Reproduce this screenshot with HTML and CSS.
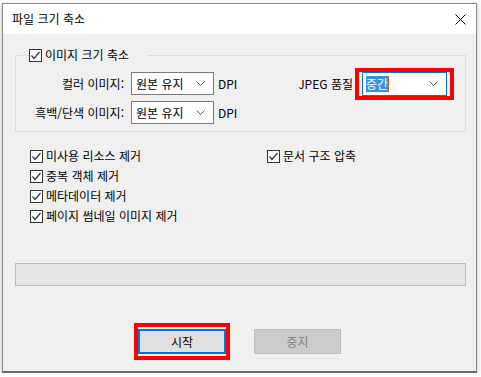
FILE: index.html
```html
<!DOCTYPE html>
<html lang="ko">
<head>
  <meta charset="UTF-8">
  <title>파일 크기 축소</title>
  <link rel="stylesheet" href="styles.css">
</head>
<body>

  <div class="window">
    <div class="titlebar">
      <span class="title">파일 크기 축소</span>
      <svg class="close" width="11" height="11" viewBox="0 0 11 11">
        <path d="M0.5 0.5 L10.5 10.5 M10.5 0.5 L0.5 10.5" stroke="#000" stroke-width="1" fill="none"/>
      </svg>
    </div>

    <div class="content">
      <div class="group">
        <div class="legend">
          <span class="check"><svg width="11" height="11" viewBox="0 0 11 11"><path d="M1.5 5.5 L4 8.5 L9.5 2" stroke="#333" stroke-width="1.2" fill="none"/></svg></span>
          <span>이미지 크기 축소</span>
        </div>

        <div class="row first">
          <span class="label">컬러 이미지:</span>
          <div class="combo">
            <span>원본 유지</span>
            <svg class="chev" width="9" height="5" viewBox="0 0 9 5"><path d="M0.5 0.5 L4.5 4.5 L8.5 0.5" stroke="#555" fill="none"/></svg>
          </div>
          <span class="unit">DPI</span>

          <span class="jpeg-label">JPEG 품질</span>
          <div class="mark wide">
            <div class="combo focus">
              <span class="sel">중간</span>
              <svg class="chev" width="9" height="5" viewBox="0 0 9 5"><path d="M0.5 0.5 L4.5 4.5 L8.5 0.5" stroke="#555" fill="none"/></svg>
            </div>
          </div>
        </div>

        <div class="row">
          <span class="label">흑백/단색 이미지:</span>
          <div class="combo">
            <span>원본 유지</span>
            <svg class="chev" width="9" height="5" viewBox="0 0 9 5"><path d="M0.5 0.5 L4.5 4.5 L8.5 0.5" stroke="#555" fill="none"/></svg>
          </div>
          <span class="unit">DPI</span>
        </div>
      </div>

      <div class="options">
        <div class="option">
          <span class="check"><svg width="11" height="11" viewBox="0 0 11 11"><path d="M1.5 5.5 L4 8.5 L9.5 2" stroke="#333" stroke-width="1.2" fill="none"/></svg></span>
          <span>미사용 리소스 제거</span>
        </div>
        <div class="option">
          <span class="check"><svg width="11" height="11" viewBox="0 0 11 11"><path d="M1.5 5.5 L4 8.5 L9.5 2" stroke="#333" stroke-width="1.2" fill="none"/></svg></span>
          <span>문서 구조 압축</span>
        </div>
        <div class="option">
          <span class="check"><svg width="11" height="11" viewBox="0 0 11 11"><path d="M1.5 5.5 L4 8.5 L9.5 2" stroke="#333" stroke-width="1.2" fill="none"/></svg></span>
          <span>중복 객체 제거</span>
        </div>
        <div></div>
        <div class="option">
          <span class="check"><svg width="11" height="11" viewBox="0 0 11 11"><path d="M1.5 5.5 L4 8.5 L9.5 2" stroke="#333" stroke-width="1.2" fill="none"/></svg></span>
          <span>메타데이터 제거</span>
        </div>
        <div></div>
        <div class="option">
          <span class="check"><svg width="11" height="11" viewBox="0 0 11 11"><path d="M1.5 5.5 L4 8.5 L9.5 2" stroke="#333" stroke-width="1.2" fill="none"/></svg></span>
          <span>페이지 썸네일 이미지 제거</span>
        </div>
      </div>

      <div class="progress"></div>

      <div class="buttons">
        <div class="mark">
          <button class="btn default">시작</button>
        </div>
        <button class="btn disabled">중지</button>
      </div>
    </div>
  </div>

</body>
</html>
```

FILE: styles.css
```css
body {
  margin: 0;
  padding: 3px 0 0 2px;
  background: #fbfbfb;
  font-family: "Noto Sans CJK KR", "Noto Sans", sans-serif;
  font-size: 12px;
  color: #000;
}

.window {
  width: 475px;
  height: 370px;
  box-sizing: border-box;
  border: 1px solid #8a8a8a;
  border-bottom: 2px solid #6a6a6a;
  background: #f0f0f0;
  box-shadow: 0 2px 4px rgba(0, 0, 0, 0.25);
  display: flex;
  flex-direction: column;
}

.titlebar {
  height: 30px;
  background: #fff;
  display: flex;
  align-items: center;
  padding: 0 10px 0 9px;
}

.title {
  flex: 1;
  line-height: 14px;
}

.close {
  margin-right: 0;
}

.content {
  padding: 21px 10px 0 12px;
}

.group {
  height: 77px;
  box-sizing: border-box;
  border: 1px solid #dcdcdc;
}

.legend {
  display: flex;
  align-items: center;
  width: fit-content;
  margin: -8px 0 0 13px;
  padding-right: 18px;
  background: #f0f0f0;
  line-height: 14px;
  gap: 3px;
}

.check {
  width: 13px;
  height: 13px;
  box-sizing: border-box;
  border: 1px solid #333;
  background: #fff;
  display: flex;
  align-items: center;
  justify-content: center;
  flex-shrink: 0;
}

.row {
  display: flex;
  align-items: center;
  height: 23px;
  margin-top: 6px;
}

.row.first {
  margin-top: 10px;
}

.label {
  width: 108px;
  text-align: right;
  margin-right: 7px;
  line-height: 14px;
}

.combo {
  width: 83px;
  height: 23px;
  box-sizing: border-box;
  border: 1px solid #7a7a7a;
  background: #fff;
  display: flex;
  align-items: center;
  padding: 0 8px 0 4px;
}

.combo span {
  flex: 1;
  line-height: 14px;
}

.unit {
  margin-left: 4px;
  line-height: 14px;
}

.jpeg-label {
  margin-left: auto;
  margin-right: 2px;
  line-height: 14px;
}

.mark {
  border: 4px solid #ff0000;
  padding: 2px 0;
  display: flex;
}

.mark.wide {
  padding: 0 3px;
  margin-right: 11px;
}

.combo.focus {
  width: 85px;
  height: 24px;
  border-color: #0078d7;
  padding-left: 3px;
}

.combo .sel {
  flex: none;
  background: #3393e6;
  color: #fff;
  padding: 1px 0;
  border-right: 1px solid #c0601a;
}

.combo .chev {
  margin-left: auto;
}

.options {
  display: grid;
  grid-template-columns: 237px 1fr;
  grid-auto-rows: 20px;
  margin: 14px 0 0 15px;
}

.option {
  display: flex;
  align-items: center;
  gap: 3px;
  line-height: 14px;
}

.progress {
  height: 23px;
  box-sizing: border-box;
  margin-top: 37px;
  width: 451px;
  border: 1px solid #bcbcbc;
  background: #e6e6e6;
}

.buttons {
  display: flex;
  justify-content: center;
  align-items: center;
  gap: 24px;
  margin-top: 37px;
  padding-right: 6px;
}

.btn {
  width: 87px;
  height: 25px;
  box-sizing: border-box;
  font-family: inherit;
  font-size: 12px;
  padding: 0;
}

.btn.default {
  width: 88px;
  border: 2px solid #0078d7;
  background: #e1e1e1;
  color: #000;
}

.btn.disabled {
  border: 1px solid #bfbfbf;
  background: #cccccc;
  color: #838383;
}
```
